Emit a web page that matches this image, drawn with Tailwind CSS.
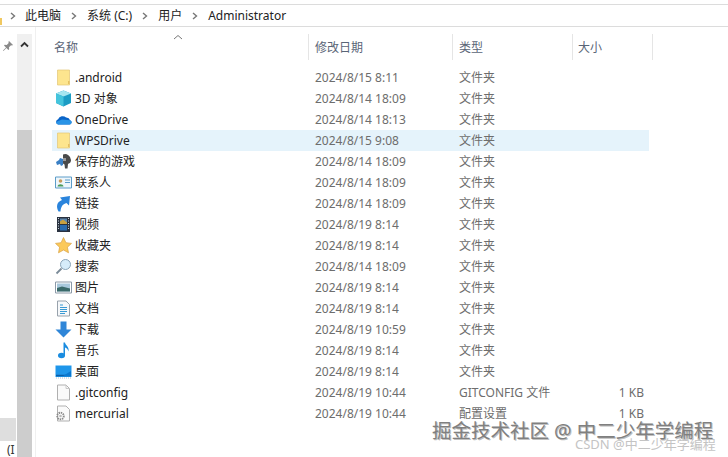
<!DOCTYPE html>
<html>
<head>
    <meta charset="UTF-8">
    <title>Administrator</title>
    <script src="https://cdn.jsdelivr.net/npm/@tailwindcss/browser@4"></script>
</head>
<body class="bg-white">
<div class="relative flex flex-col w-[728px] h-[457px] overflow-hidden bg-white text-[12px] font-['Noto_Sans','Noto_Sans_CJK_SC',sans-serif]">

    <!-- address bar -->
    <div class="mt-[4px] h-[23px] border-y border-[#dcdcdc] flex items-center shrink-0 text-[#222]">
        <div class="w-[2px] h-[7px] bg-[#f0c860] mt-[12px]"></div>
        <svg class="ml-[8px] mr-[9px]" width="6" height="8" viewBox="0 0 6 8"><path d="M1 1l3.5 3L1 7" fill="none" stroke="#777" stroke-width="1.4"/></svg>
        <span>此电脑</span>
        <svg class="mx-[10px]" width="6" height="8" viewBox="0 0 6 8"><path d="M1 1l3.5 3L1 7" fill="none" stroke="#777" stroke-width="1.4"/></svg>
        <span>系统 (C:)</span>
        <svg class="mx-[10px]" width="6" height="8" viewBox="0 0 6 8"><path d="M1 1l3.5 3L1 7" fill="none" stroke="#777" stroke-width="1.4"/></svg>
        <span>用户</span>
        <svg class="mx-[10px]" width="6" height="8" viewBox="0 0 6 8"><path d="M1 1l3.5 3L1 7" fill="none" stroke="#777" stroke-width="1.4"/></svg>
        <span>Administrator</span>
    </div>

    <div class="flex flex-1 min-h-0">
        <!-- nav pane edge -->
        <div class="w-[17px] shrink-0 flex flex-col pt-[13px]">
            <svg class="ml-[2px]" width="12" height="12" viewBox="0 0 12 12"><path d="M7 1l4 4-1 .6-1-.3-2 2 .2 2-.8.7-2-2L1.500 11 1 10.500l3-2.900-2-2 .7-.8 2 .2 2-2-.3-1z" fill="#8a8a8a"/></svg>
            <div class="mt-auto mb-[2px] h-[23px] w-[16px] bg-[#dedede]"></div>
            <div class="h-[14px] pl-[7px] leading-[14px] text-[#333] overflow-hidden">(I</div>
        </div>

        <!-- scrollbar -->
        <div class="w-[15px] shrink-0 flex flex-col mt-[7px] bg-[#f0f0f0]">
            <div class="h-[20px] flex items-center justify-center">
                <svg width="9" height="7" viewBox="0 0 9 7"><path d="M1 5.500l3.500-3.500 3.500 3.500" fill="none" stroke="#333" stroke-width="1.800"/></svg>
            </div>
            <div class="mt-[76px] flex-1 bg-[#cdcdcd]"></div>
        </div>

        <div class="w-[3px] shrink-0"></div>
        <div class="w-px shrink-0 bg-[#f0f0f0]"></div>

        <!-- file list -->
        <div class="pl-[16px] pt-[7px] w-[660px] text-[#6d6d6d]">
            <div class="relative flex h-[26px] items-center text-[#5a6577]">
                <div class="w-[257px] h-full pl-[2px] pt-px flex items-center border-r border-[#e5e5e5]">名称</div>
                <div class="w-[144px] h-full pl-[6px] pt-px flex items-center border-r border-[#e5e5e5]">修改日期</div>
                <div class="w-[120px] h-full pl-[6px] pt-px flex items-center border-r border-[#e5e5e5]">类型</div>
                <div class="w-[80px] h-full pl-[5px] pt-px flex items-center border-r border-[#e5e5e5]">大小</div>
                <svg class="absolute left-[121px] top-[0px]" width="10" height="6" viewBox="0 0 10 6"><path d="M1 5l4-3.500L9 5" fill="none" stroke="#777" stroke-width="1"/></svg>
            </div>

            <div class="mt-[7px] w-[597px]">
                <div class="flex h-[21px] items-center">
                    <div class="w-[263px] flex items-center pl-[3px] gap-[3px] text-[#222]">
                        <svg width="17" height="17" viewBox="0 0 17 17"><path d="M2.500 1h12v15h-12z" fill="#fde58e" stroke="#e2c676" stroke-width=".7"/><path d="M13 12h1.500v3H13z" fill="#e6c060"/></svg>
                        <span>.android</span>
                    </div>
                    <div class="w-[144px]">2024/8/15 8:11</div>
                    <div>文件夹</div>
                </div>
                <div class="flex h-[21px] items-center">
                    <div class="w-[263px] flex items-center pl-[3px] gap-[3px] text-[#222]">
                        <svg width="17" height="17" viewBox="0 0 17 17"><path d="M8.500 .5L16 3.500v9.500l-7.500 3.500L1 13V3.500z" fill="#1c9cc4"/><path d="M8.500 .5L16 3.500 8.500 6.500 1 3.500z" fill="#a6e6f0"/><path d="M1 3.500l7.500 3v10L1 13z" fill="#45c4dc"/></svg>
                        <span>3D 对象</span>
                    </div>
                    <div class="w-[144px]">2024/8/14 18:09</div>
                    <div>文件夹</div>
                </div>
                <div class="flex h-[21px] items-center">
                    <div class="w-[263px] flex items-center pl-[3px] gap-[3px] text-[#222]">
                        <svg width="17" height="17" viewBox="0 0 17 17"><path d="M3 13.500h11.500a2.200 2.200 0 0 0 .6-4.300 4 4 0 0 0-4-2.700 5 5 0 0 0-8 1.800A2.700 2.700 0 0 0 3 13.500z" fill="#0a64c8"/><path d="M3 13.500h11.500a2.200 2.200 0 0 0 .6-4.300L7 8.500 1 11a2.700 2.700 0 0 0 2 2.500z" fill="#2a94e6"/></svg>
                        <span>OneDrive</span>
                    </div>
                    <div class="w-[144px]">2024/8/14 18:13</div>
                    <div>文件夹</div>
                </div>
                <div class="flex h-[21px] items-center bg-[#e5f3fb]">
                    <div class="w-[263px] flex items-center pl-[3px] gap-[3px] text-[#222]">
                        <svg width="17" height="17" viewBox="0 0 17 17"><path d="M2.500 1h12v15h-12z" fill="#fde58e" stroke="#e2c676" stroke-width=".7"/><path d="M13 12h1.500v3H13z" fill="#e6c060"/></svg>
                        <span>WPSDrive</span>
                    </div>
                    <div class="w-[144px]">2024/8/15 9:08</div>
                    <div>文件夹</div>
                </div>
                <div class="flex h-[21px] items-center">
                    <div class="w-[263px] flex items-center pl-[3px] gap-[3px] text-[#222]">
                        <svg width="17" height="17" viewBox="0 0 17 17"><path d="M1 9l3-2 1-2 3 1v6l-2 1-1-2-3 1z" fill="#3a7fc4"/><path d="M8 1.500a6 6 0 0 1 8 5.500c0 3-2 3.500-3 4l-.5 4.500H10l-.5-4-1.500-1z" fill="#4a4a4a"/><path d="M8 5h3v3H8z" fill="#9a9a9a"/></svg>
                        <span>保存的游戏</span>
                    </div>
                    <div class="w-[144px]">2024/8/14 18:09</div>
                    <div>文件夹</div>
                </div>
                <div class="flex h-[21px] items-center">
                    <div class="w-[263px] flex items-center pl-[3px] gap-[3px] text-[#222]">
                        <svg width="17" height="17" viewBox="0 0 17 17"><path d="M.5 3h16v11H.5z" fill="#eef6fb" stroke="#5c9cc8"/><circle cx="5.500" cy="7" r="1.800" fill="#c89a5a"/><path d="M2.500 12.500c.3-3 5.700-3 6 0z" fill="#4a9a5a"/><path d="M10 6h5M10 8.500h5" stroke="#5c9cc8"/></svg>
                        <span>联系人</span>
                    </div>
                    <div class="w-[144px]">2024/8/14 18:09</div>
                    <div>文件夹</div>
                </div>
                <div class="flex h-[21px] items-center">
                    <div class="w-[263px] flex items-center pl-[3px] gap-[3px] text-[#222]">
                        <svg width="17" height="17" viewBox="0 0 17 17"><path d="M3.500 16.500C1 12 1.500 7 7 5L5 2.500 15 1l-1 9.500-2.500-2.500C8 9 6 11 5.500 16.500z" fill="#2a84dc"/></svg>
                        <span>链接</span>
                    </div>
                    <div class="w-[144px]">2024/8/14 18:09</div>
                    <div>文件夹</div>
                </div>
                <div class="flex h-[21px] items-center">
                    <div class="w-[263px] flex items-center pl-[3px] gap-[3px] text-[#222]">
                        <svg width="17" height="17" viewBox="0 0 17 17"><path d="M2 1h13v15H2z" fill="#2a3240"/><path d="M5 2.500h7v5.500H5z" fill="#5a86b0"/><path d="M5 5.500l3-2 4 3v1.500H5z" fill="#c8a040"/><path d="M5 9h7v5.500H5z" fill="#2a6cb0"/><path d="M3 2.500h1M3 5h1M3 7.500h1M3 10h1M3 12.500h1M13 2.500h1M13 5h1M13 7.500h1M13 10h1M13 12.500h1" stroke="#c8d4dc" stroke-width="1.200"/></svg>
                        <span>视频</span>
                    </div>
                    <div class="w-[144px]">2024/8/19 8:14</div>
                    <div>文件夹</div>
                </div>
                <div class="flex h-[21px] items-center">
                    <div class="w-[263px] flex items-center pl-[3px] gap-[3px] text-[#222]">
                        <svg width="17" height="17" viewBox="0 0 17 17"><path d="M8.500 .5l2.400 5.200 5.600.7-4.100 3.800 1.100 5.600-5-2.800-5 2.800 1.100-5.600L.5 6.400l5.600-.7z" fill="#fbc95a" stroke="#d8a040" stroke-width=".7"/></svg>
                        <span>收藏夹</span>
                    </div>
                    <div class="w-[144px]">2024/8/19 8:14</div>
                    <div>文件夹</div>
                </div>
                <div class="flex h-[21px] items-center">
                    <div class="w-[263px] flex items-center pl-[3px] gap-[3px] text-[#222]">
                        <svg width="17" height="17" viewBox="0 0 17 17"><circle cx="10.500" cy="6.500" r="5" fill="#d6ecfa" stroke="#8aa4b8"/><path d="M6.500 10.500L1.500 15.500" stroke="#7a8a98" stroke-width="1.800"/></svg>
                        <span>搜索</span>
                    </div>
                    <div class="w-[144px]">2024/8/14 18:09</div>
                    <div>文件夹</div>
                </div>
                <div class="flex h-[21px] items-center">
                    <div class="w-[263px] flex items-center pl-[3px] gap-[3px] text-[#222]">
                        <svg width="17" height="17" viewBox="0 0 17 17"><path d="M.5 3h16v11H.5z" fill="#fff" stroke="#8c9aa8"/><path d="M2 4.500h13v8H2z" fill="#a8c8dc"/><path d="M2 9l5-1.500 8 2v3H2z" fill="#3a6a6a"/></svg>
                        <span>图片</span>
                    </div>
                    <div class="w-[144px]">2024/8/19 8:14</div>
                    <div>文件夹</div>
                </div>
                <div class="flex h-[21px] items-center">
                    <div class="w-[263px] flex items-center pl-[3px] gap-[3px] text-[#222]">
                        <svg width="17" height="17" viewBox="0 0 17 17"><path d="M2.500 1H11l3.500 3.500V16h-12z" fill="#f6f8fa" stroke="#98a2ac"/><path d="M5 5h3M5 7.500h7M5 9.500h7M5 11.500h7M5 13.500h5" stroke="#3a9ad4"/></svg>
                        <span>文档</span>
                    </div>
                    <div class="w-[144px]">2024/8/19 8:14</div>
                    <div>文件夹</div>
                </div>
                <div class="flex h-[21px] items-center">
                    <div class="w-[263px] flex items-center pl-[3px] gap-[3px] text-[#222]">
                        <svg width="17" height="17" viewBox="0 0 17 17"><path d="M5.500 .5h6v8h5l-8 8-8-8h5z" fill="#2f86d8"/></svg>
                        <span>下载</span>
                    </div>
                    <div class="w-[144px]">2024/8/19 10:59</div>
                    <div>文件夹</div>
                </div>
                <div class="flex h-[21px] items-center">
                    <div class="w-[263px] flex items-center pl-[3px] gap-[3px] text-[#222]">
                        <svg width="17" height="17" viewBox="0 0 17 17"><ellipse cx="6.500" cy="13.500" rx="3.500" ry="2.800" fill="#1a8ce0"/><path d="M8.500 13.500V.5h1.500c.3 3 4.500 4 3.500 9-.6-2.500-2-3.500-3.500-4v8z" fill="#1a8ce0"/></svg>
                        <span>音乐</span>
                    </div>
                    <div class="w-[144px]">2024/8/19 8:14</div>
                    <div>文件夹</div>
                </div>
                <div class="flex h-[21px] items-center">
                    <div class="w-[263px] flex items-center pl-[3px] gap-[3px] text-[#222]">
                        <svg width="17" height="17" viewBox="0 0 17 17"><path d="M.5 2.500h16v11.500H.5z" fill="#1e96ea"/><path d="M1 12.500h15" stroke="#0a5ea8" stroke-width="1.500"/><path d="M8 13l8-5v5z" fill="#0a78d0"/><path d="M1 15h15" stroke="#a8c4dc" stroke-dasharray="1 1"/></svg>
                        <span>桌面</span>
                    </div>
                    <div class="w-[144px]">2024/8/19 8:14</div>
                    <div>文件夹</div>
                </div>
                <div class="flex h-[21px] items-center">
                    <div class="w-[263px] flex items-center pl-[3px] gap-[3px] text-[#222]">
                        <svg width="17" height="17" viewBox="0 0 17 17"><path d="M2.500 1H11l3.500 3.500V16h-12z" fill="#fafafa" stroke="#b0b0b0"/><path d="M11 1v3.500h3.500" fill="none" stroke="#c8c8c8"/></svg>
                        <span>.gitconfig</span>
                    </div>
                    <div class="w-[144px]">2024/8/19 10:44</div>
                    <div class="w-[185px] flex justify-between"><span>GITCONFIG 文件</span><span>1 KB</span></div>
                </div>
                <div class="flex h-[21px] items-center">
                    <div class="w-[263px] flex items-center pl-[3px] gap-[3px] text-[#222]">
                        <svg width="17" height="17" viewBox="0 0 17 17"><path d="M2.500 1H11l3.500 3.500V16h-12z" fill="#fafafa" stroke="#b0b0b0"/><circle cx="5.500" cy="11" r="3.300" fill="none" stroke="#8a8a8a" stroke-width="1.800" stroke-dasharray="1.400 .8"/><circle cx="5.500" cy="11" r="1.300" fill="#bbb"/></svg>
                        <span>mercurial</span>
                    </div>
                    <div class="w-[144px]">2024/8/19 10:44</div>
                    <div class="w-[185px] flex justify-between"><span>配置设置</span><span>1 KB</span></div>
                </div>
            </div>
        </div>
    </div>

    <!-- watermarks -->
    <div class="absolute left-[432px] top-[417px] text-[19.5px] leading-[28px] whitespace-nowrap text-[#808080] [text-shadow:1px_1px_0_#c0c0c0]">掘金技术社区 @ 中二少年学编程</div>
    <div class="absolute left-[575px] top-[437px] text-[13px] leading-[15px] whitespace-nowrap text-[#c4c4c4]">CSDN @中二少年学编程</div>
</div>
</body>
</html>
